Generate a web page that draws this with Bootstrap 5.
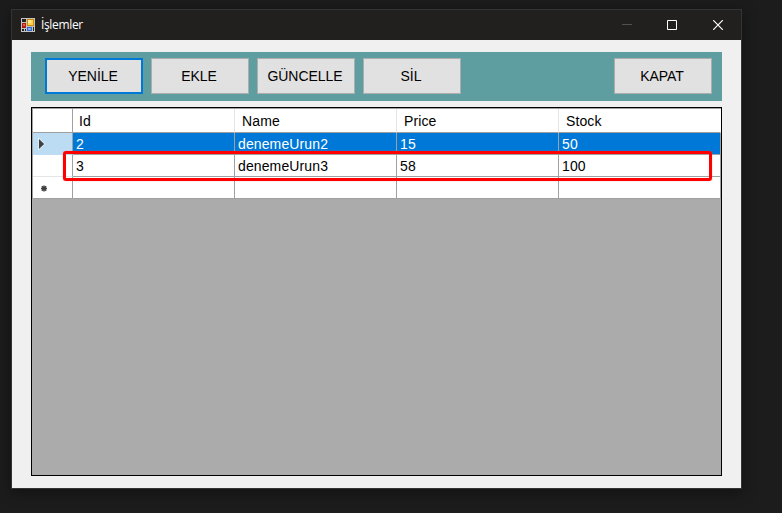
<!DOCTYPE html>
<html lang="tr">
<head>
<meta charset="utf-8">
<meta name="viewport" content="width=device-width, initial-scale=1">
<title>İşlemler</title>
<link href="https://cdn.jsdelivr.net/npm/bootstrap@5.3.0/dist/css/bootstrap.min.css" rel="stylesheet">
<style>
body{background:#1c1c1c;height:513px;overflow:hidden;padding:9px 0 0 11px;font-family:"Liberation Sans",Arial,sans-serif;font-size:14px;line-height:20px;color:#000}
.app-window{width:731px;height:480px;background:#f0f0f0;border:1px solid #333534;box-shadow:0 3px 14px rgba(0,0,0,.4)}
.title-bar{height:30px;background:#21201e;color:#fff;padding-left:9px}
.title-text{font:12px/16px "Open Sans","Noto Sans",sans-serif;margin-left:6px;letter-spacing:-.35px}
.win-controls{margin-right:17px;gap:35px}
.app-body{padding:12px 19px 12px 19px}
.tool-strip{height:49px;background:#5f9ea0;padding:6px 10px 7px 14px;margin-bottom:6px;gap:8px}
.tool-btn{width:98px;height:36px;padding:0 2px 0 0;border:1px solid #adadad;border-radius:0;background:#e1e1e1;color:#000;font-size:14px;line-height:34px;letter-spacing:-.05px}
.tool-btn:hover{background:#e5f1fb;border-color:#0078d7}
.tool-btn.is-default{border:2px solid #0078d7;line-height:32px}
.data-view{height:369px;background:#ababab;border:1px solid #000;position:relative}
.data-table{width:689px;table-layout:fixed;border-collapse:separate;border-spacing:0;background:#fff;border-left:1px solid #a0a0a0;border-top:1px solid #a0a0a0}
.data-table th,.data-table td{padding:1px 0 0 3px;height:22px;font-weight:400;line-height:20px;border-right:1px solid #a0a0a0;border-bottom:1px solid #a0a0a0;letter-spacing:.12px}
.data-table td{padding-top:2px;line-height:19px}
.data-table thead th{height:24px;line-height:21px;padding:2px 0 0 7px;border-right-color:#e5e5e5}
.data-table thead th:nth-child(2){padding-left:6px}
.data-table thead th:first-child,.data-table tbody th{border-right-color:#a0a0a0}
.data-table thead th:last-child{border-right-color:#fff}
.data-table tbody th{border-bottom-color:#e5e5e5;padding:0}
.data-table tbody tr:last-child th{border-bottom-color:#a0a0a0}
.data-table .picked td{background:#0078d7;color:#fff}
.data-table .picked th{background:#bcdcf4;border-bottom-color:#bcdcf4}
.data-table svg{display:block}
.highlight-box{position:absolute;left:31px;top:43px;width:649px;height:30px;border:3px solid #fe0000;border-radius:3px;box-shadow:0 0 1px #f66;pointer-events:none}
</style>
<script src="https://cdn.jsdelivr.net/npm/bootstrap@5.3.0/dist/js/bootstrap.bundle.min.js"></script>
</head>
<body>
<main class="app-window d-flex flex-column">
  <header class="title-bar d-flex align-items-center">
    <svg width="14" height="14" viewBox="0 0 14 14" shape-rendering="crispEdges" aria-hidden="true">
      <path fill="#c3c3c3" d="M0 0h14v14H0z"/>
      <path fill="#222" d="M1 1h4v3H1zM1 11h2v2H1zM4 11h1v2H4zM12 9h1v4h-1z"/>
      <path fill="#a71d18" d="M1 5h4v5H1z"/><path fill="#e85a4d" d="M2 6h2v2H2z"/>
      <path fill="#c98a00" d="M6 1h7v7H6z"/><path fill="#ffd34d" d="M7 2h5v5H7z"/><path fill="#ffe794" d="M7 2h3v3H7z"/>
      <path fill="#3565c4" d="M6 9h5v4H6z"/><path fill="#7eaaf5" d="M7 10h3v2H7z"/>
    </svg>
    <span class="title-text">İşlemler</span>
    <div class="win-controls d-flex align-items-center ms-auto">
      <svg width="10" height="10" viewBox="0 0 10 10" aria-label="Simge durumuna küçült"><path stroke="#51504e" d="M0 4.5h10"/></svg>
      <svg width="11" height="10" viewBox="0 0 11 10" aria-label="Ekranı kapla"><path fill="none" stroke="#fff" d="M.5.5h9v9h-9z"/></svg>
      <svg width="11" height="10" viewBox="0 0 11 10" aria-label="Kapat"><path fill="none" stroke="#fff" stroke-width="1.2" d="M.2.2l9.6 9.6M9.8.2L.2 9.8"/></svg>
    </div>
  </header>
  <section class="app-body flex-grow-1">
    <div class="tool-strip d-flex">
      <button class="btn tool-btn is-default" type="button">YENİLE</button>
      <button class="btn tool-btn" type="button">EKLE</button>
      <button class="btn tool-btn" type="button">GÜNCELLE</button>
      <button class="btn tool-btn" type="button">SİL</button>
      <button class="btn tool-btn ms-auto" type="button">KAPAT</button>
    </div>
    <div class="data-view">
      <table class="data-table">
        <colgroup><col style="width:40px"><col style="width:162px"><col style="width:162px"><col style="width:162px"><col style="width:162px"></colgroup>
        <thead><tr><th></th><th>Id</th><th>Name</th><th>Price</th><th>Stock</th></tr></thead>
        <tbody>
          <tr class="picked">
            <th><svg width="20" height="16" viewBox="0 0 20 16"><path fill="#404040" stroke="#e8f3fb" stroke-width="1.4" paint-order="stroke" d="M6 3v10L11.2 8z"/></svg></th>
            <td>2</td><td>denemeUrun2</td><td>15</td><td>50</td>
          </tr>
          <tr><th></th><td>3</td><td>denemeUrun3</td><td>58</td><td>100</td></tr>
          <tr>
            <th><svg width="20" height="14" viewBox="0 0 20 14"><path stroke="#404040" stroke-width="1.4" d="M11 4.5v6M8 7.5h6M8.8 5.3l4.4 4.4M13.2 5.3L8.8 9.7"/></svg></th>
            <td></td><td></td><td></td><td></td>
          </tr>
        </tbody>
      </table>
      <div class="highlight-box"></div>
    </div>
  </section>
</main>
</body>
</html>
